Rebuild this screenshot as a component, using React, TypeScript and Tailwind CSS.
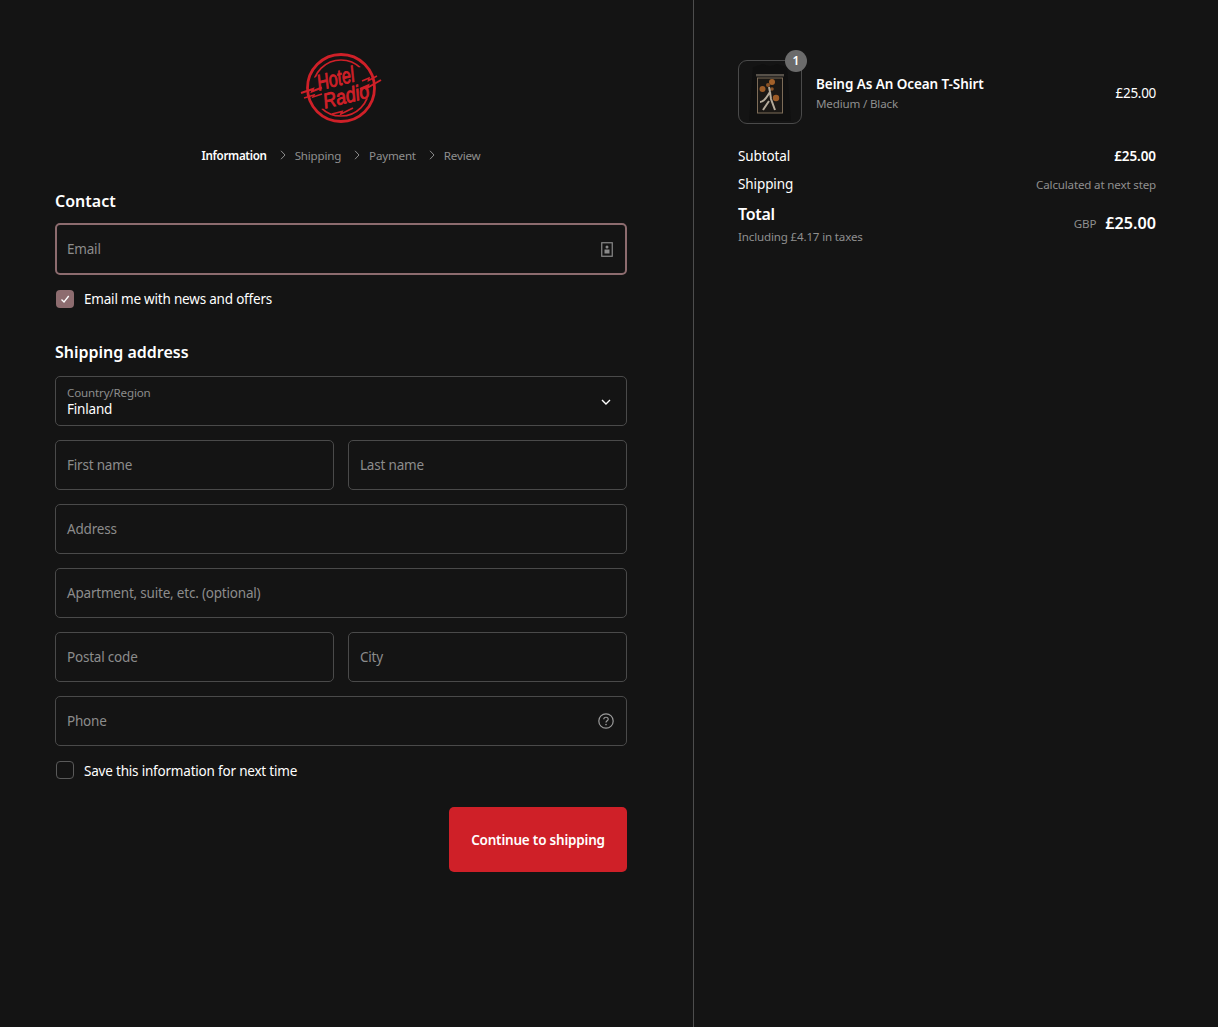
import React from "react";

const FONT = { fontFamily: '"Noto Sans", sans-serif' };

function Logo() {
  return (
    <svg width="82" height="72" viewBox="0 0 82 72" className="block" fill="none">
      <circle cx="41" cy="36" r="28" stroke="#cf2028" strokeWidth="1.7" />
      <rect x="9" y="20" width="64" height="32" fill="#141414" transform="rotate(-13 41 36)" />
      <circle cx="41" cy="36" r="33.5" stroke="#cf2028" strokeWidth="2.8" />
      <path d="M1 41 L13 37 L12 39.5 L22 35.5 M60 37 L68 33.5 L67 36 L81 28" stroke="#cf2028" strokeWidth="2" />
      <path d="M4 46 L14 43 L13 45 L22 42 M62 29 L69 26 L68.5 28.5 L77 24" stroke="#cf2028" strokeWidth="1.5" />
      <path d="M32 62 L42 59.5 L41 62 L53 56" stroke="#cf2028" strokeWidth="1.8" />
      <g transform="rotate(-14 41 36)" fill="#cf2028" stroke="#cf2028" strokeWidth="0.9" fontFamily='"Liberation Sans", sans-serif' fontStyle="italic">
        <text x="38" y="33" textAnchor="middle" fontSize="22" textLength="38" lengthAdjust="spacingAndGlyphs">Hotel</text>
        <text x="44" y="52" textAnchor="middle" fontSize="21" textLength="47" lengthAdjust="spacingAndGlyphs">Radio</text>
      </g>
    </svg>
  );
}

function Shirt() {
  return (
    <svg width="62" height="62" viewBox="0 0 62 62" fill="none" className="blur-[0.4px]">
      <path d="M14 6 L24 3 Q31 7 38 3 L48 6 L52 60 L10 60 Z" fill="#101010" />
      <rect x="17" y="13" width="28" height="2.4" fill="#575149" />
      <rect x="18.5" y="17" width="25" height="35" fill="#1b1815" stroke="#7d6c58" strokeWidth="1" />
      <circle cx="33" cy="21" r="3" fill="#a3612a" />
      <circle cx="29" cy="24" r="2" fill="#8a5226" />
      <circle cx="23.5" cy="28" r="3" fill="#9c5c28" />
      <circle cx="37" cy="37" r="3.2" fill="#9c5c28" />
      <circle cx="33" cy="28" r="1.8" fill="#8a5226" />
      <path d="M21 41 C26 41 28 35 31 31 L32 38 L36 49 M30 40 L24 49 M31 31 L30 26" stroke="#b5ab9b" strokeWidth="2" />
    </svg>
  );
}

function Chevron() {
  return (
    <svg width="10" height="10" viewBox="0 0 10 10" fill="none" className="mb-[2px] ml-[11px] mr-[7px]">
      <path d="M3 0.8 L7 5 L3 9.2" stroke="#8d8d8d" strokeWidth="1" />
    </svg>
  );
}

function Field({ label, icon }: { label: string; icon?: React.ReactNode }) {
  return (
    <div className="flex h-[50px] w-full items-center justify-between rounded-[5px] border border-[#4a4a4a] pl-[11px] pr-[12px] text-[13.5px] tracking-[-0.2px] text-[#8c8c8c]">
      <span>{label}</span>
      {icon}
    </div>
  );
}

export default function App() {
  return (
    <div style={FONT} className="flex min-h-[1027px] w-full bg-[#141414] text-white">
      <div className="flex w-[694px] shrink-0 flex-col border-r border-[#4d4d4d] pl-[55px] pr-[66px] pt-[52px]">
        <div className="flex justify-center">
          <Logo />
        </div>
        <div className="mt-[20px] flex h-[24px] items-center justify-center text-[11.6px] tracking-[-0.2px] text-[#8f8f8f]">
          <span className="font-semibold tracking-[-0.32px] text-white">Information</span>
          <Chevron />
          <span>Shipping</span>
          <Chevron />
          <span>Payment</span>
          <Chevron />
          <span>Review</span>
        </div>

        <h2 className="mt-[21px] h-[24px] text-[16px] font-semibold leading-[24px]">Contact</h2>
        <div className="mt-[10px] flex h-[52px] items-center justify-between rounded-[5px] border-2 border-[#8d6c6f] pl-[10px] pr-[12px] text-[13.5px] tracking-[-0.2px] text-[#8c8c8c]">
          <span className="pt-[1px]">Email</span>
          <svg width="12" height="15" viewBox="0 0 12 15" fill="none">
            <rect x="0.75" y="0.75" width="10.5" height="13.5" stroke="#8a8a8a" strokeWidth="1.2" />
            <circle cx="6" cy="5" r="1.5" fill="#8a8a8a" />
            <rect x="3.5" y="7.5" width="5" height="4" fill="#8a8a8a" />
          </svg>
        </div>
        <label className="ml-[1px] mt-[15px] flex h-[18px] items-center gap-[10px] text-[13.5px] tracking-[-0.2px]">
          <span className="flex h-[18px] w-[18px] items-center justify-center rounded-[4px] bg-[#8d6c6f]">
            <svg width="10" height="10" viewBox="0 0 10 10" fill="none">
              <path d="M1.5 5.5 L4 8 L8.7 2" stroke="#fff" strokeWidth="1.3" />
            </svg>
          </span>
          <span className="pt-[1px]">Email me with news and offers</span>
        </label>

        <h2 className="mt-[32px] h-[24px] text-[16px] font-semibold leading-[24px]">Shipping address</h2>
        <div className="mt-[12px] flex flex-col gap-[14px]">
          <div className="flex h-[50px] items-center justify-between rounded-[5px] border border-[#4a4a4a] pl-[11px] pr-[15px]">
            <div className="flex flex-col">
              <span className="text-[11.6px] leading-[16px] tracking-[-0.17px] text-[#8c8c8c]">Country/Region</span>
              <span className="text-[13.5px] leading-[16px] tracking-[-0.2px] text-white">Finland</span>
            </div>
            <svg width="10" height="6" viewBox="0 0 10 6" fill="none" className="mt-[1px]">
              <path d="M1 1 L5 5 L9 1" stroke="#fff" strokeWidth="1.4" />
            </svg>
          </div>
          <div className="grid grid-cols-2 gap-[14px]">
            <Field label="First name" />
            <Field label="Last name" />
          </div>
          <Field label="Address" />
          <Field label="Apartment, suite, etc. (optional)" />
          <div className="grid grid-cols-2 gap-[14px]">
            <Field label="Postal code" />
            <Field label="City" />
          </div>
          <Field
            label="Phone"
            icon={
              <svg width="16" height="16" viewBox="0 0 16 16" fill="none">
                <circle cx="8" cy="8" r="7.2" stroke="#9a9a9a" strokeWidth="1.2" />
                <path d="M5.8 6.2 C5.8 3.6 10.2 3.6 10.2 6.2 C10.2 7.8 8 7.8 8 9.6" stroke="#9a9a9a" strokeWidth="1.2" />
                <circle cx="8" cy="11.6" r="0.8" fill="#9a9a9a" />
              </svg>
            }
          />
        </div>
        <label className="ml-[1px] mt-[15px] flex h-[18px] items-center gap-[10px] text-[13.5px] tracking-[-0.2px]">
          <span className="h-[18px] w-[18px] rounded-[4px] border border-[#5a5a5a]" />
          <span className="pt-[3px]">Save this information for next time</span>
        </label>
        <div className="mt-[28px] flex justify-end">
          <button className="h-[65px] w-[178px] rounded-[5px] bg-[#cf2028] pt-[2px] text-[13.5px] font-semibold tracking-[-0.2px] text-white">
            Continue to shipping
          </button>
        </div>
      </div>

      <div className="flex w-[524px] flex-col pl-[44px] pr-[62px] pt-[60px]">
        <div className="flex h-[64px] items-center justify-between">
          <div className="flex items-center">
            <div className="relative flex h-[64px] w-[64px] items-center justify-center rounded-[9px] border border-[#4a4a4a]">
              <Shirt />
              <span className="absolute right-[-6px] top-[-11px] flex h-[22px] w-[22px] items-center justify-center rounded-full bg-[#6b6b6b] text-[12px] font-semibold text-white">
                1
              </span>
            </div>
            <div className="ml-[14px] flex flex-col pt-[3px]">
              <span className="text-[13.5px] font-semibold leading-[20px] tracking-[-0.08px]">Being As An Ocean T-Shirt</span>
              <span className="text-[11.6px] leading-[19px] tracking-[-0.17px] text-[#8f8f8f]">Medium / Black</span>
            </div>
          </div>
          <span className="pt-[2px] text-[13.5px] tracking-[-0.3px]">£25.00</span>
        </div>
        <div className="mt-[22px] flex h-[20px] items-center justify-between text-[13.5px] tracking-[-0.1px]">
          <span>Subtotal</span>
          <span className="font-semibold">£25.00</span>
        </div>
        <div className="mt-[8px] flex h-[20px] items-center justify-between">
          <span className="text-[13.5px] tracking-[-0.1px]">Shipping</span>
          <span className="pt-[2px] text-[11.6px] tracking-[-0.17px] text-[#8f8f8f]">Calculated at next step</span>
        </div>
        <div className="mt-[8px] flex justify-between">
          <div className="flex flex-col">
            <span className="text-[16px] font-semibold leading-[24px] tracking-[-0.3px]">Total</span>
            <span className="mt-[2px] text-[11.6px] leading-[18px] tracking-[-0.17px] text-[#8f8f8f]">Including £4.17 in taxes</span>
          </div>
          <div className="mt-[9px] flex h-[24px] items-center gap-[9px]">
            <span className="pt-[2px] text-[11.6px] tracking-[-0.17px] text-[#8f8f8f]">GBP</span>
            <span className="text-[16.2px] font-semibold">£25.00</span>
          </div>
        </div>
      </div>
    </div>
  );
}
